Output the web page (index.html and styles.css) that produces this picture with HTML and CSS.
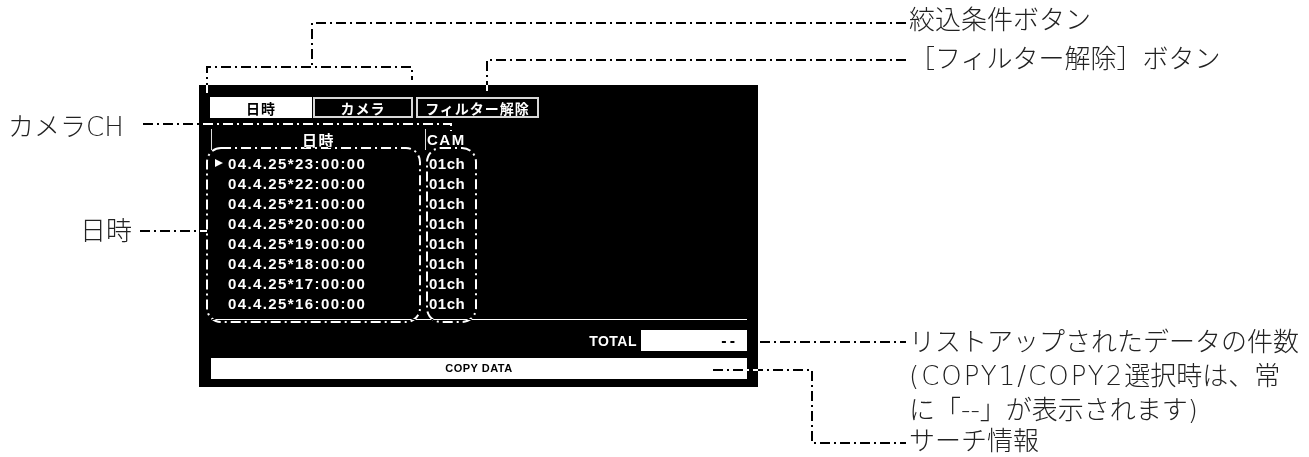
FILE: index.html
```html
<!DOCTYPE html>
<html lang="ja">
<head>
    <meta charset="UTF-8">
    <meta name="viewport" content="width=device-width, initial-scale=1.0">
    <title>検索結果リスト</title>
    <link rel="stylesheet" href="styles.css">
</head>
<body>
    <div class="figure">
        <!-- monitor screen -->
        <div class="screen">
            <div class="tabs">
                <div class="tab tab-date active">日時</div>
                <div class="tab tab-cam">カメラ</div>
                <div class="tab tab-clear">フィルター解除</div>
            </div>

            <div class="list-head">
                <div class="col-date">日時</div>
                <div class="col-cam">CAM</div>
            </div>

            <div class="list">
                <div class="list-row selected"><span class="cursor"></span><span class="date">04.4.25*23:00:00</span><span class="cam">01ch</span></div>
                <div class="list-row"><span class="cursor"></span><span class="date">04.4.25*22:00:00</span><span class="cam">01ch</span></div>
                <div class="list-row"><span class="cursor"></span><span class="date">04.4.25*21:00:00</span><span class="cam">01ch</span></div>
                <div class="list-row"><span class="cursor"></span><span class="date">04.4.25*20:00:00</span><span class="cam">01ch</span></div>
                <div class="list-row"><span class="cursor"></span><span class="date">04.4.25*19:00:00</span><span class="cam">01ch</span></div>
                <div class="list-row"><span class="cursor"></span><span class="date">04.4.25*18:00:00</span><span class="cam">01ch</span></div>
                <div class="list-row"><span class="cursor"></span><span class="date">04.4.25*17:00:00</span><span class="cam">01ch</span></div>
                <div class="list-row"><span class="cursor"></span><span class="date">04.4.25*16:00:00</span><span class="cam">01ch</span></div>
            </div>

            <div class="rule"></div>

            <div class="total">
                <span class="total-label">TOTAL</span>
                <span class="total-value">--</span>
            </div>

            <div class="copy-bar">COPY DATA</div>
        </div>

        <!-- leader lines (drawn with difference so they turn white over the screen) -->
        <svg class="leaders" width="1309" height="457" viewBox="0 0 1309 457">
            <g fill="none" stroke="#fff" stroke-width="2" stroke-dasharray="10 4 2 4">
                <path d="M906 23 H312 V67 M207 93 V67 H412 V80"/>
                <path d="M906 60 H487 V93"/>
                <path d="M143 124 H451 V131"/>
                <path d="M140 231 H207"/>
                <rect x="207" y="148" width="213" height="174" rx="14"/>
                <rect x="427" y="148" width="49" height="174" rx="14"/>
                <path d="M760 342 H906"/>
                <path d="M713 370 H812 V443 H906"/>
            </g>
        </svg>

        <div class="callout c-narrow">絞込条件ボタン</div>
        <div class="callout c-clear">［フィルター解除］ボタン</div>
        <div class="callout c-cam">カメラCH</div>
        <div class="callout c-date">日時</div>
        <div class="callout c-count">リストアップされたデータの件数<br><span class="wide">(COPY1/COPY2</span>選択時は、常<br>に「--」が表示されます)</div>
        <div class="callout c-search">サーチ情報</div>
    </div>
</body>
</html>
```

FILE: styles.css
```css
/* General Reset */
* {
    margin: 0;
    padding: 0;
    box-sizing: border-box;
}

body {
    background: #fff;
    font-family: 'Liberation Sans', 'Noto Sans CJK JP', sans-serif;
}

.figure {
    position: relative;
    width: 1309px;
    height: 457px;
    padding: 85px 0 0 199px;
    overflow: hidden;
}

/* ---- screen ---- */
.screen {
    width: 559px;
    height: 302px;
    background: #000;
    color: #fff;
    padding: 12px 11px 8px 11px;
    display: flex;
    flex-direction: column;
    font-weight: bold;
}

.tabs {
    display: flex;
    height: 21px;
}

.tab {
    display: flex;
    justify-content: center;
    align-items: center;
    font-size: 14px;
    letter-spacing: 1px;
    border: 2px solid #d8d8d8;
    color: #fff;
}

.tab.active {
    background: #fff;
    color: #000;
    border-color: #fff;
}

.tab-date { width: 102px; }
.tab-cam { width: 100px; margin-left: 1px; }
.tab-clear { width: 123px; margin-left: 3px; }

.list-head {
    display: grid;
    grid-template-columns: 214px 1fr;
    height: 19px;
    margin: 11px 0 0 1px;
    font-size: 15px;
    letter-spacing: 1.5px;
    align-items: center;
}

.list-head > div {
    border-left: 1px solid #ddd;
    height: 100%;
    display: flex;
    align-items: center;
}

.col-date {
    justify-content: center;
}

.col-cam {
    padding-left: 1px;
    align-self: start;
    height: 21px !important;
}

.list {
    margin: 5px 0 0 1px;
}

.list-row {
    display: grid;
    grid-template-columns: 17px 197px 1fr;
    align-items: center;
    height: 20px;
    font-size: 15px;
    letter-spacing: 1.4px;
}

.cursor {
    width: 0;
    height: 0;
    margin-left: 4px;
    border-left: 8px solid #fff;
    border-top: 4px solid transparent;
    border-bottom: 4px solid transparent;
    visibility: hidden;
}

.list-row.selected .cursor {
    visibility: visible;
}

.cam {
    padding-left: 4px;
    letter-spacing: 0.5px;
}

.rule {
    height: 1px;
    background: #fff;
    margin: 6px 0 0 1px;
}

.total {
    display: flex;
    justify-content: flex-end;
    align-items: center;
    height: 21px;
    margin-top: 10px;
}

.total-label {
    font-size: 14px;
    letter-spacing: 0.5px;
}

.total-value {
    width: 106px;
    height: 21px;
    margin-left: 4px;
    background: #fff;
    color: #000;
    text-align: right;
    padding-right: 9px;
    font-size: 16px;
    letter-spacing: 3px;
    line-height: 21px;
}

.copy-bar {
    height: 21px;
    margin: 7px 0 0 1px;
    background: #fff;
    color: #000;
    font-size: 11px;
    letter-spacing: 0.5px;
    text-align: center;
    line-height: 21px;
}

/* ---- annotations ---- */
.leaders {
    position: absolute;
    left: 0;
    top: 0;
    pointer-events: none;
    mix-blend-mode: difference;
}

.callout {
    position: absolute;
    font-family: 'DejaVu Sans', 'Noto Sans CJK JP', sans-serif;
    font-weight: 300;
    font-size: 26px;
    line-height: 35px;
    color: #222;
    white-space: nowrap;
}

.callout .wide {
    letter-spacing: 2px;
}

.c-narrow { left: 909px; top: 3px; }
.c-clear { left: 909px; top: 42px; }
.c-cam { left: 8px; top: 110px; }
.c-date { left: 80px; top: 214px; }
.c-count { left: 909px; top: 325px; line-height: 34px; }
.c-search { left: 909px; top: 428px; line-height: 26px; }
```
